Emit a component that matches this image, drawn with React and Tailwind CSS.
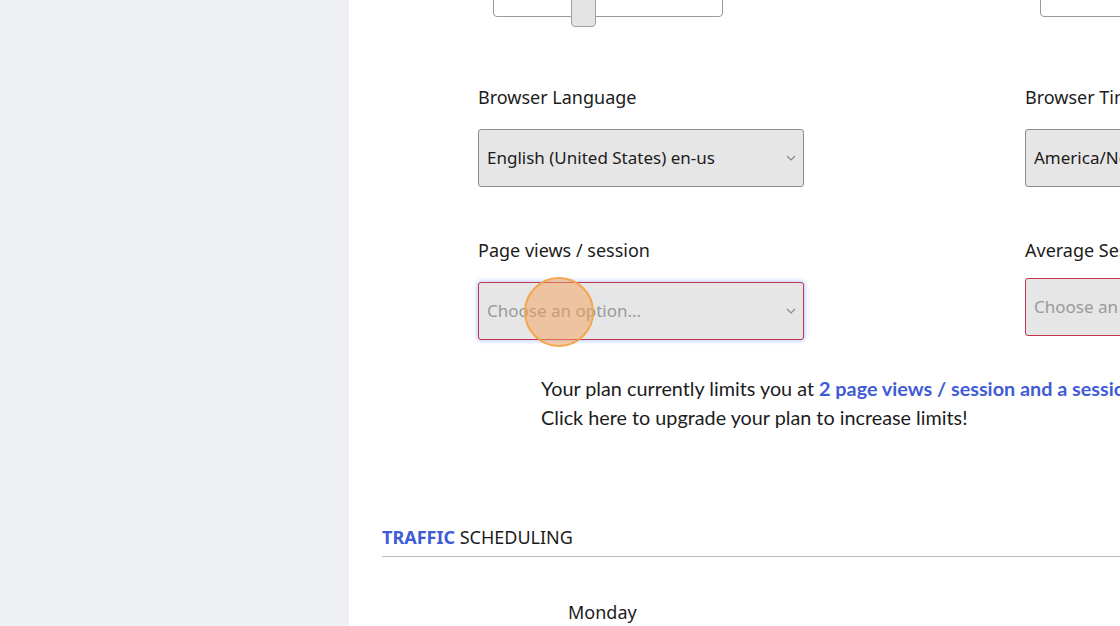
import { useState } from 'react';

const FONT = "font-['Noto_Sans','Open_Sans',sans-serif]";

function Chevron() {
  return (
    <svg width="10" height="6" viewBox="0 0 10 6" className="shrink-0">
      <polyline points="1,1 5,5 9,1" fill="none" stroke="#8a8a8a" strokeWidth="1.2" />
    </svg>
  );
}

function SelectBox({ value, placeholder, invalid, glow, className = '' }) {
  return (
    <div
      className={`h-[58px] flex items-center justify-between pl-2 pr-[7px] rounded-[3px] bg-[#e6e6e6] border ${
        invalid ? 'border-[#c7344e]' : 'border-[#8c8c8c]'
      } ${glow ? 'shadow-[0_0_4px_1px_rgba(120,160,255,0.55)]' : ''} ${className}`}
    >
      <span className={`text-[17px] whitespace-nowrap ${value ? 'text-[#1c1c1c]' : 'text-[#9a9a9a]'}`}>
        {value || placeholder}
      </span>
      <Chevron />
    </div>
  );
}

export default function App() {
  const [lang] = useState('English (United States) en-us');

  return (
    <div className={`flex h-[626px] w-[1120px] overflow-hidden ${FONT}`}>
      <aside className="w-[349px] shrink-0 bg-[#eef0f4]" />

      <main className="flex-1 min-w-0 bg-white relative overflow-hidden">
        {/* partially scrolled-off controls */}
        <div className="flex -mt-[23px] h-[50px]">
          <div className="ml-[144px] shrink-0 relative w-[230px] h-[40px] border border-[#9a9a9a] rounded-[4px] bg-white">
            <div className="absolute left-[77px] top-[19px] w-[25px] h-[30px] bg-[#e4e4e4] border border-[#a0a0a0] rounded-[4px]" />
          </div>
          <div className="ml-[317px] shrink-0 w-[120px] h-[40px] border border-[#9a9a9a] rounded-[4px]" />
        </div>

        <div className="grid grid-cols-[326px_326px] gap-x-[221px] pl-[129px] pt-[57px]">
          <div>
            <p className="text-[18px] text-[#1c1c1c] leading-[26px]">Browser Language</p>
            <SelectBox value={lang} className="mt-[19px]" />
          </div>
          <div>
            <p className="text-[18px] text-[#1c1c1c] leading-[26px] whitespace-nowrap">Browser Timezone</p>
            <SelectBox value="America/New_York" className="mt-[19px]" />
          </div>

          <div className="mt-[50px]">
            <p className="text-[18px] text-[#1c1c1c] leading-[26px]">Page views / session</p>
            <SelectBox placeholder="Choose an option..." invalid glow className="mt-[19px]" />
          </div>
          <div className="mt-[50px]">
            <p className="text-[18px] text-[#1c1c1c] leading-[26px] whitespace-nowrap">Average Session Duration</p>
            <SelectBox placeholder="Choose an option..." invalid className="mt-[15px]" />
          </div>
        </div>

        <div className="pl-[192px] pt-[34px] text-[19.8px] leading-[29px] text-[#1c1c1c] font-['Lato',sans-serif] whitespace-nowrap">
          <p>
            Your plan currently limits you at{' '}
            <span className="font-bold text-[#3f5bd6]">2 page views / session and a session duration of 30 seconds</span>
          </p>
          <p>Click here to upgrade your plan to increase limits!</p>
        </div>

        <div className="ml-[33px] mt-[92px] border-b border-[#bdbdbd] pb-[6px]">
          <h2 className="text-[18px] leading-[26px] text-[#1c1c1c]">
            <span className="font-bold text-[#3f5bd6]">TRAFFIC</span> SCHEDULING
          </h2>
        </div>

        <p className="ml-[219px] mt-[42px] text-[18px] leading-[26px] text-[#1c1c1c]">Monday</p>

        {/* click indicator */}
        <div className="absolute left-[175px] top-[277px] w-[70px] h-[70px] rounded-full bg-[rgba(244,160,90,0.5)] border-2 border-[#f5a54f]" />
      </main>
    </div>
  );
}
